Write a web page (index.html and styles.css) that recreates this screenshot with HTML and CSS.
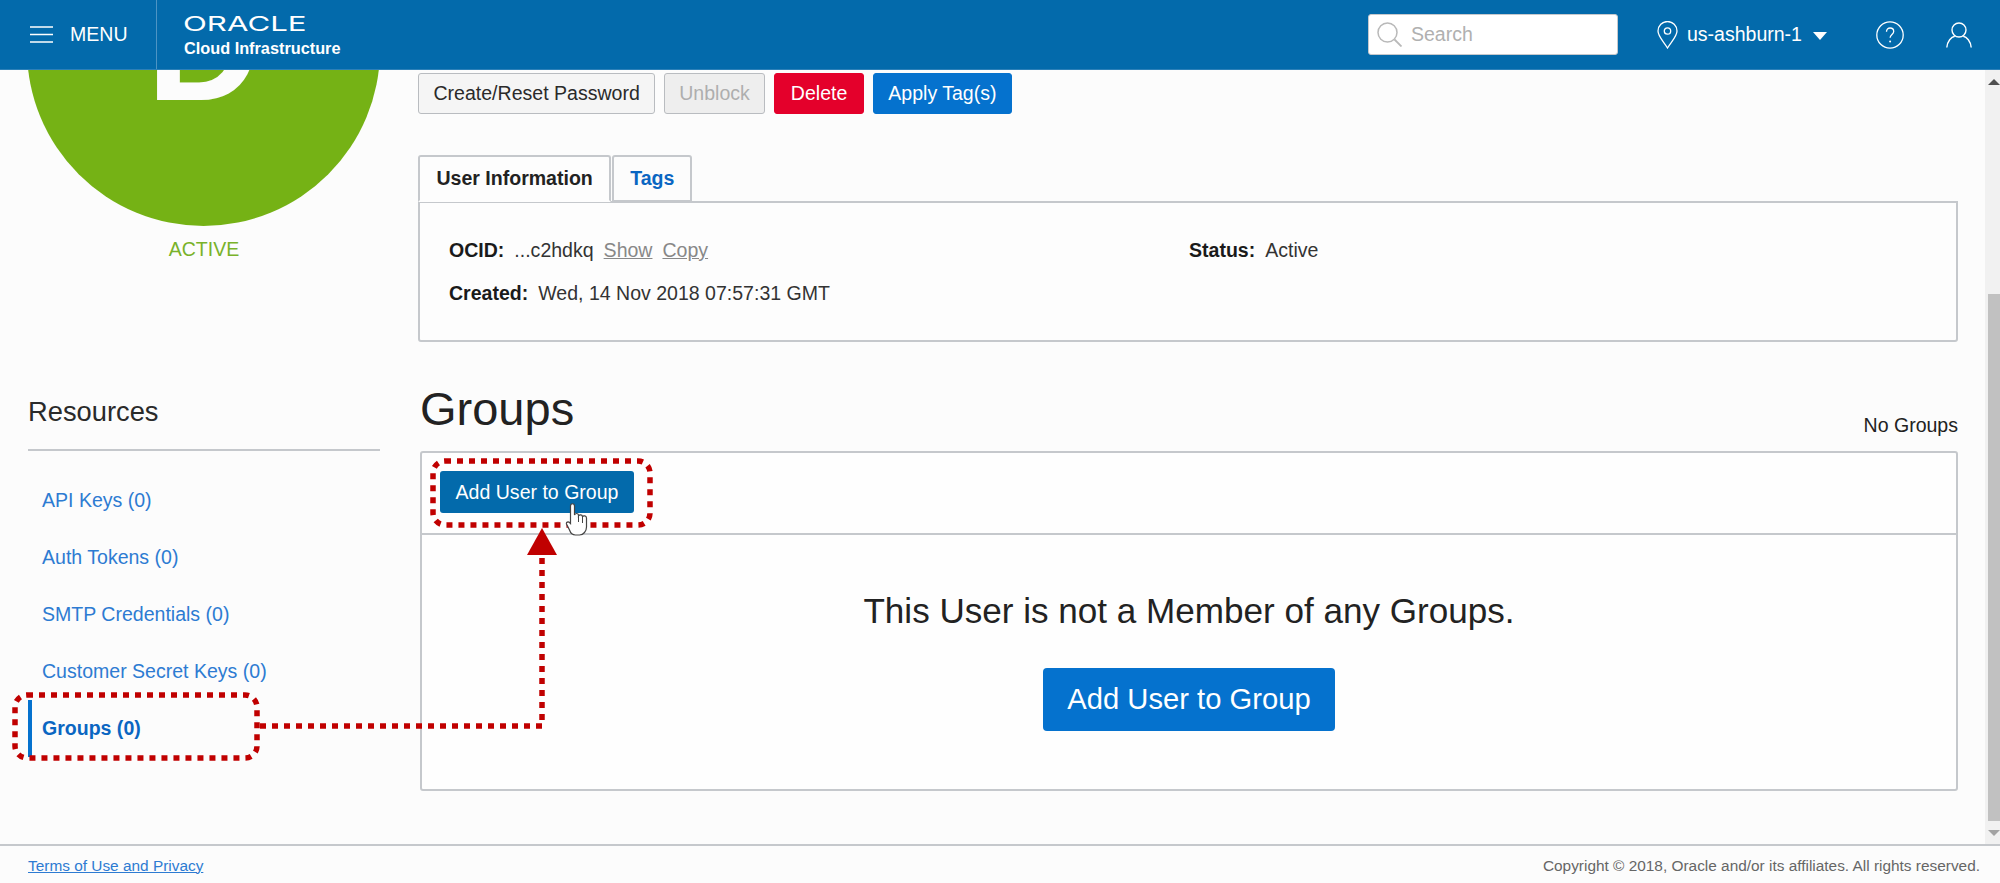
FILE: index.html
```html
<!DOCTYPE html>
<html lang="en">
<head>
<meta charset="utf-8">
<title>Oracle Cloud Infrastructure - User</title>
<link rel="stylesheet" href="styles.css">
</head>
<body>
<header class="topbar">
  <div class="menu">
    <svg class="hamburger" viewBox="0 0 23 17" width="23" height="17"><path d="M0 1h23M0 8.500h23M0 16h23" stroke="#fff" stroke-width="1.500" fill="none"/></svg>
    <span class="menu-label">MENU</span>
  </div>
  <div class="brand">
    <span class="brand-word">ORACLE</span>
    <span class="brand-sub">Cloud Infrastructure</span>
  </div>
  <div class="top-right">
    <div class="search">
      <svg class="search-icon" viewBox="0 0 25 25" width="25" height="25"><circle cx="10.500" cy="10.500" r="9.500" fill="none" stroke="#b9b9b9" stroke-width="1.500"/><path d="M17.500 17.500 24.500 24.500" stroke="#b9b9b9" stroke-width="1.800"/></svg>
      <span class="search-text">Search</span>
    </div>
    <div class="region">
      <svg viewBox="0 0 21 28" width="21" height="28"><path d="M10.500 27C7 21 1 15.500 1 10a9.500 9.500 0 0 1 19 0c0 5.500-6 11-9.500 17Z" fill="none" stroke="#fff" stroke-width="1.300"/><circle cx="10.500" cy="10" r="3.200" fill="none" stroke="#fff" stroke-width="1.300"/></svg>
      <span class="region-name">us-ashburn-1</span>
      <span class="caret"></span>
    </div>
    <svg class="help" viewBox="0 0 28 28" width="28" height="28"><circle cx="14" cy="14" r="13.200" fill="none" stroke="#fff" stroke-width="1.300"/><path d="M10.500 10.800c0-2.300 1.600-3.800 3.600-3.800s3.600 1.500 3.600 3.400c0 3-3.600 3.200-3.600 6.400" fill="none" stroke="#fff" stroke-width="1.300"/><circle cx="14.100" cy="20.500" r="1" fill="#fff"/></svg>
    <svg class="user" viewBox="0 0 26 26" width="26" height="26"><circle cx="13" cy="8" r="7" fill="none" stroke="#fff" stroke-width="1.400"/><path d="M.8 25.500c.5-6.500 4.500-10.500 8-11.300M25.200 25.500c-.5-6.500-4.500-10.500-8-11.300" fill="none" stroke="#fff" stroke-width="1.400"/></svg>
  </div>
</header>

<div class="viewport">
  <main class="page">
    <aside class="sidebar">
      <div class="avatar"><span class="avatar-letter">D</span></div>
      <div class="status-label">ACTIVE</div>
      <h2 class="res-title">Resources</h2>
      <ul class="res-list">
        <li class="res-item"><a href="#">API Keys (0)</a></li>
        <li class="res-item"><a href="#">Auth Tokens (0)</a></li>
        <li class="res-item"><a href="#">SMTP Credentials (0)</a></li>
        <li class="res-item"><a href="#">Customer Secret Keys (0)</a></li>
        <li class="res-item is-active"><a href="#">Groups (0)</a></li>
      </ul>
    </aside>
    <section class="content">
      <div class="actions">
        <button class="btn">Create/Reset Password</button>
        <button class="btn btn-disabled">Unblock</button>
        <button class="btn btn-danger">Delete</button>
        <button class="btn btn-primary">Apply Tag(s)</button>
      </div>
      <div class="tabs">
        <div class="tab tab-active">User Information</div>
        <div class="tab tab-link">Tags</div>
      </div>
      <div class="info">
        <div class="info-col">
          <div class="info-row"><b>OCID:</b><span>...c2hdkq</span><a class="muted" href="#">Show</a><a class="muted" href="#">Copy</a></div>
          <div class="info-row"><b>Created:</b><span>Wed, 14 Nov 2018 07:57:31 GMT</span></div>
        </div>
        <div class="info-col">
          <div class="info-row"><b>Status:</b><span>Active</span></div>
        </div>
      </div>
      <div class="groups">
        <div class="groups-head">
          <h1 class="groups-title">Groups</h1>
          <span class="groups-count">No Groups</span>
        </div>
        <div class="table">
          <div class="table-tools"><button class="btn-add">Add User to Group</button></div>
          <div class="table-empty">
            <p class="empty-text">This User is not a Member of any Groups.</p>
            <button class="btn-big">Add User to Group</button>
          </div>
        </div>
      </div>
    </section>
  </main>
  <div class="scrollbar">
    <span class="arrow-up"></span>
    <span class="thumb"></span>
    <span class="arrow-down"></span>
  </div>
</div>

<footer class="footer">
  <a href="#">Terms of Use and Privacy</a>
  <span class="copyright">Copyright © 2018, Oracle and/or its affiliates. All rights reserved.</span>
</footer>

<svg class="annotations" viewBox="0 0 2000 883" width="2000" height="883">
  <g fill="none" stroke="#c00000" stroke-width="5.500" stroke-dasharray="6 6">
    <rect x="433" y="461" width="217" height="64" rx="12"/>
    <rect x="15" y="695" width="242" height="63" rx="12"/>
    <path d="M260 726H542V556"/>
  </g>
  <path d="M542 528 557 555H527Z" fill="#c00000"/>
  <path d="M570.500 506c0-3 4-3 4 0v9c1-2 3.500-2 4 0v1c1-1.500 3.500-1.500 4 .5 1-1.200 4-.8 4 1.500v9c0 4-3 8-7 8h-4c-3 0-5-2-6-5l-3-6c-.5-1.500 1.500-3 3-1.500l1 1Z" fill="#fff" stroke="#444" stroke-width="1.200"/>
  <path d="M578.500 516v6M582.500 517v6" fill="none" stroke="#444" stroke-width="1"/>
</svg>
</body>
</html>
```
FILE: styles.css
```css
* { box-sizing: border-box; }
html, body { margin: 0; height: 100%; overflow: hidden; }
body {
  display: flex;
  flex-direction: column;
  height: 883px;
  background: #fcfcfc;
  color: #222;
  font-family: "Liberation Sans", Arial, sans-serif;
  font-size: 19.55px;
}
a { color: inherit; }
button { font-family: inherit; cursor: pointer; }

/* top bar */
.topbar {
  position: relative;
  z-index: 2;
  flex: 0 0 70px;
  display: flex;
  align-items: stretch;
  background: #036aab;
  border-bottom: 1px solid #2c80b8;
  color: #fff;
}
.menu {
  flex: 0 0 157px;
  display: flex;
  align-items: center;
  gap: 17px;
  padding-left: 30px;
  border-right: 1px solid #4d94c4;
}
.brand {
  display: flex;
  flex-direction: column;
  padding: 14px 0 0 27px;
}
.brand-word {
  display: block;
  width: 84px;
  height: 20px;
  margin-left: -1px;
  font-family: Inter, "Liberation Sans", sans-serif;
  font-size: 20px;
  line-height: 20px;
  font-weight: 400;
  transform: scaleX(1.56);
  transform-origin: left center;
}
.brand-sub {
  margin-top: 5px;
  font-size: 16.3px;
  line-height: 19px;
  font-weight: 700;
  white-space: nowrap;
}
.top-right {
  margin-left: auto;
  display: flex;
  align-items: center;
  padding-right: 28px;
}
.search {
  width: 250px;
  height: 41px;
  display: flex;
  align-items: center;
  gap: 9px;
  padding-left: 8px;
  background: #fff;
  border: 1px solid #c5c8cc;
  border-radius: 3px;
  margin-right: 39px;
}
.search-text { color: #b0b0b0; }
.region { display: flex; align-items: center; margin-right: 49px; }
.region-name { margin-left: 9px; }
.caret {
  margin: 3px 0 0 11px;
  border-left: 7.500px solid transparent;
  border-right: 7.500px solid transparent;
  border-top: 8px solid #fff;
}
.help { margin-right: 42px; }

/* scrolling region */
.viewport {
  flex: 1 1 auto;
  min-height: 0;
  display: flex;
  overflow: hidden;
}
.page {
  flex: 1 1 auto;
  min-width: 0;
  display: flex;
  gap: 38px;
  padding-left: 28px;
  padding-right: 27px;
}
.sidebar { flex: 0 0 352px; }
.avatar {
  width: 353px;
  height: 353px;
  margin: -197px 0 0 -1px;
  border-radius: 50%;
  background: #75b215;
  display: flex;
  align-items: center;
  justify-content: center;
  overflow: hidden;
}
.avatar-letter {
  color: #fcfcfc;
  font-size: 158px;
  line-height: 1;
  font-weight: 700;
  padding-bottom: 9px;
}
.status-label {
  margin-top: 12px;
  text-align: center;
  color: #79b22a;
  line-height: 22px;
}
.res-title {
  margin: 136px 0 0;
  padding-bottom: 22px;
  border-bottom: 2px solid #c5c8cc;
  font-size: 27.3px;
  line-height: 31px;
  font-weight: 400;
  color: #2a2a2a;
}
.res-list { list-style: none; margin: 21px 0 0; padding: 0; }
.res-item {
  height: 57px;
  padding-left: 14px;
  display: flex;
  align-items: center;
  color: #2d7bd2;
}
.res-item a { text-decoration: none; }
.res-item.is-active {
  color: #0a66c2;
  font-weight: 700;
  border-left: 4px solid #0572ce;
  padding-left: 10px;
}
.content { flex: 1 1 auto; min-width: 0; padding-top: 3px; }
.actions { display: flex; gap: 9px; }
.btn {
  height: 41px;
  padding: 0 14.500px;
  border: 1px solid #b9bcc0;
  border-radius: 3px;
  background: #f5f5f5;
  color: #2a2a2a;
  font-size: 19.55px;
}
.btn-disabled { color: #aeaeae; background: #eeeeee; cursor: default; padding: 0 14px; }
.btn-danger { background: #e4002b; border-color: #e4002b; color: #fff; padding: 0 16px; }
.btn-primary { background: #0572ce; border-color: #0572ce; color: #fff; padding: 0 14px; }

.tabs { display: flex; gap: 1px; margin-top: 41px; position: relative; z-index: 1; }
.tab {
  height: 47px;
  display: flex;
  align-items: center;
  border: 2px solid #c5c8cc;
  border-radius: 3px 3px 0 0;
  padding: 0 16.500px;
  font-weight: 700;
}
.tab-active { background: #fdfdfd; border-bottom-color: #fdfdfd; }
.tab-link { color: #0a66c2; padding: 0 16px; }
.info {
  display: grid;
  grid-template-columns: 740px 1fr;
  height: 141px;
  margin-top: -1px;
  padding: 34px 0 0 29px;
  background: #fdfdfd;
  border: 2px solid #c5c8cc;
  border-radius: 0 0 3px 3px;
}
.info-row { display: flex; gap: 10px; height: 43px; line-height: 26px; color: #333; }
.info-row b { color: #1a1a1a; }
.muted { color: #888; }

.groups { padding-left: 2px; }
.groups-head {
  display: flex;
  align-items: flex-end;
  justify-content: space-between;
  margin-top: 37px;
}
.groups-title {
  margin: 0;
  font-size: 47px;
  line-height: 60px;
  font-weight: 400;
  color: #222;
}
.groups-count { padding-bottom: 3px; line-height: 22px; }
.table {
  height: 340px;
  margin-top: 12px;
  background: #fefefe;
  border: 2px solid #c5c8cc;
  border-radius: 3px;
}
.table-tools {
  height: 82px;
  padding: 18px 0 0 18px;
  border-bottom: 2px solid #c5c8cc;
}
.btn-add {
  display: block;
  width: 194px;
  height: 42px;
  border: 0;
  border-radius: 3px;
  background: #036aab;
  color: #fff;
  font-size: 19.55px;
}
.table-empty { text-align: center; }
.empty-text {
  margin: 56px 0 0;
  font-size: 35.1px;
  line-height: 40px;
  color: #222;
}
.btn-big {
  display: block;
  width: 292px;
  height: 63px;
  margin: 37px auto 0;
  border: 0;
  border-radius: 4px;
  background: #0572ce;
  color: #fff;
  font-size: 29.2px;
}

/* scrollbar */
.scrollbar {
  flex: 0 0 15px;
  position: relative;
  display: flex;
  flex-direction: column;
  background: #f1f1f1;
}
.arrow-up {
  margin: 9px 0 0 3px;
  width: 0;
  border-left: 6px solid transparent;
  border-right: 6px solid transparent;
  border-bottom: 6px solid #505050;
}
.thumb { flex: 1 1 auto; margin: 209px 0 0 3px; background: #c1c1c1; }
.arrow-down {
  margin: 9px 0 8px 3px;
  width: 0;
  border-left: 6px solid transparent;
  border-right: 6px solid transparent;
  border-top: 6px solid #a3a3a3;
}

/* footer */
.footer {
  flex: 0 0 39px;
  display: flex;
  align-items: center;
  justify-content: space-between;
  padding: 2px 20px 0 28px;
  background: #fcfcfc;
  border-top: 2px solid #c5c8cc;
  font-size: 15.4px;
}
.footer a { color: #2d7bd2; }
.copyright { color: #666; }

/* tutorial annotations over the screenshot */
.annotations { position: absolute; left: 0; top: 0; z-index: 3; pointer-events: none; }
```
